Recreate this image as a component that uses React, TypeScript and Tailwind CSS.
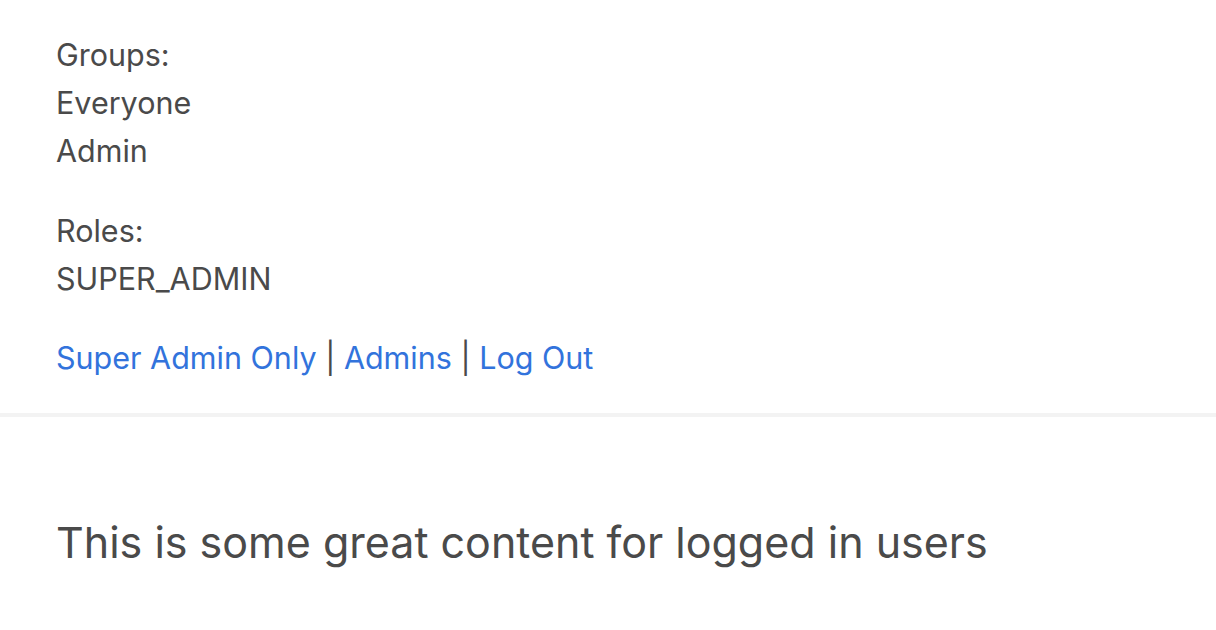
import React from 'react';

const groups = ['Everyone', 'Admin'];
const roles = ['SUPER_ADMIN'];

const links = [
  { label: 'Super Admin Only', href: '#super' },
  { label: 'Admins', href: '#admins' },
  { label: 'Log Out', href: '#logout' },
];

export default function App() {
  return (
    <div
      className="min-h-screen w-full bg-white text-[#4a4a4a]"
      style={{ fontFamily: 'Inter, "Noto Sans", sans-serif' }}
    >
      <section className="px-[56px] pt-[31px] pb-[31px] text-[30.5px] leading-[48px]">
        <div className="mb-[32px]">
          <p>Groups:</p>
          {groups.map(g => (
            <p key={g}>{g}</p>
          ))}
        </div>
        <div className="mb-[31px]">
          <p>Roles:</p>
          {roles.map(r => (
            <p key={r}>{r}</p>
          ))}
        </div>
        <p>
          {links.map((l, i) => (
            <React.Fragment key={l.label}>
              {i > 0 && ' | '}
              <a href={l.href} className="text-[#3273dc]">
                {l.label}
              </a>
            </React.Fragment>
          ))}
        </p>
      </section>
      <div className="h-[4px] bg-[#f3f3f3]" />
      <main className="px-[56px] pt-[95px]">
        <h1 className="text-[43px] leading-[60px]">This is some great content for logged in users</h1>
      </main>
    </div>
  );
}
